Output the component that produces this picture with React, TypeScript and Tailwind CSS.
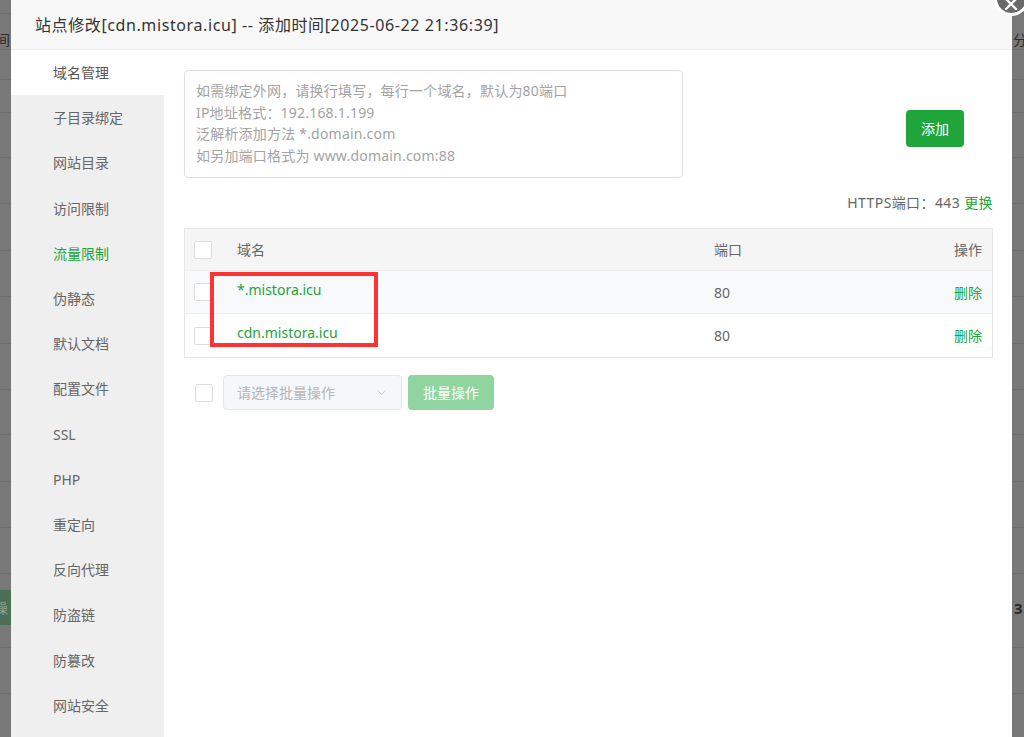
import { ChevronDown } from "lucide-react";

const menu = [
  "域名管理",
  "子目录绑定",
  "网站目录",
  "访问限制",
  "流量限制",
  "伪静态",
  "默认文档",
  "配置文件",
  "SSL",
  "PHP",
  "重定向",
  "反向代理",
  "防盗链",
  "防篡改",
  "网站安全",
];

const domains = [
  { name: "*.mistora.icu", port: 80, hover: true },
  { name: "cdn.mistora.icu", port: 80, hover: false },
];

const bgLines = [13, 49, 79, 112, 157, 203, 250, 296, 343, 389, 434, 481, 527, 573, 647, 693];

function Checkbox() {
  return <span className="block w-[18px] h-[18px] rounded-[2px] border border-[#ddd] bg-white" />;
}

export default function App() {
  return (
    <div className="relative w-[1024px] h-[737px] overflow-hidden bg-[#787878] font-['Noto_Sans','Noto_Sans_CJK_SC',sans-serif] text-[14px]">
      {/* dimmed page behind the dialog */}
      {bgLines.map((y) => (
        <div key={y} className="absolute left-0 right-0 h-px bg-[#6e6e6e]" style={{ top: y }} />
      ))}
      <div className="absolute left-[-4px] top-[29px] text-[14px] text-[#2a2a2a] whitespace-nowrap">间</div>
      <div className="absolute left-[1013px] top-[29px] text-[14px] text-[#2a2a2a] whitespace-nowrap">分类</div>
      <div className="absolute left-0 top-[590px] w-[11px] h-[35px] bg-[#4c6e52] text-[14px] leading-[35px] text-[#8aa58f] overflow-hidden whitespace-nowrap">
        <span className="ml-[-6px]">操</span>
      </div>
      <div className="absolute left-[1014px] top-[597px] text-[15px] font-bold text-[#2a2a2a]">3</div>

      {/* dialog */}
      <div className="absolute left-[11px] top-0 w-[1001px] h-[760px] bg-white flex flex-col">
        <div className="h-[50px] shrink-0 bg-[#f8f8f8] border-b border-[#eee] pl-[24px] flex items-center text-[16px] tracking-[0.6px] text-[#333]">
          站点修改[cdn.mistora.icu] -- 添加时间[2025-06-22 21:36:39]
        </div>
        <div className="flex flex-1">
          <div className="w-[153px] shrink-0 bg-[#efefef]">
            {menu.map((m, i) => (
              <div
                key={m}
                className={
                  "h-[45.2px] pl-[42px] flex items-center " +
                  (i === 0 ? "bg-white text-[#555]" : i === 4 ? "text-[#20a53a]" : "text-[#666]")
                }
              >
                {m}
              </div>
            ))}
          </div>

          <div className="flex-1 pl-[20px] pr-[19px] pt-[20px]">
            <div className="flex items-start">
              <div className="w-[499px] h-[108px] rounded-[4px] border border-[#dcdfe6] px-[11px] pt-[9px] text-[14px] leading-[21.5px] tracking-[0.2px] text-[#a3a3a3]">
                <div>如需绑定外网，请换行填写，每行一个域名，默认为80端口</div>
                <div>IP地址格式：192.168.1.199</div>
                <div>泛解析添加方法 *.domain.com</div>
                <div>如另加端口格式为 www.domain.com:88</div>
              </div>
              <button className="ml-auto mr-[29px] mt-[40px] w-[58px] h-[37px] rounded-[4px] bg-[#20a53a] text-white text-[14px]">
                添加
              </button>
            </div>

            <div className="mt-[15px] h-[20px] leading-[20px] text-right text-[#666] tracking-[0.4px]">
              HTTPS端口：443 <span className="text-[#20a53a]">更换</span>
            </div>

            <div className="relative mt-[15px] border border-[#e6e6e6]">
              <div className="h-[42px] flex items-center bg-[#f5f5f5] border-b border-[#eee] text-[#666]">
                <div className="w-[52px] pl-[9px]">
                  <Checkbox />
                </div>
                <div className="w-[477px]">域名</div>
                <div className="flex-1">端口</div>
                <div className="pr-[10px]">操作</div>
              </div>
              {domains.map((d, i) => (
                <div
                  key={d.name}
                  className={
                    "h-[43px] flex items-center " +
                    (d.hover ? "bg-[#f8f9fb] " : "bg-white ") +
                    (i < domains.length - 1 ? "border-b border-[#eee]" : "")
                  }
                >
                  <div className="w-[52px] pl-[9px]">
                    <Checkbox />
                  </div>
                  <div className="w-[477px] pb-[6px] text-[#20a53a]">{d.name}</div>
                  <div className="flex-1 text-[#666]">{d.port}</div>
                  <div className="pr-[10px] text-[#20a53a]">删除</div>
                </div>
              ))}
              <div className="absolute left-[25px] top-[43px] w-[168px] h-[75px] border-[4px] border-[#ff3333]" />
            </div>

            <div className="mt-[17px] flex items-center">
              <div className="pl-[11px] pr-[10px]">
                <Checkbox />
              </div>
              <div className="w-[179px] h-[35px] rounded-[4px] border border-[#e4e7ed] bg-[#f5f7fa] pl-[13px] pr-[12px] flex items-center justify-between text-[#b5b5b5]">
                <span>请选择批量操作</span>
                <ChevronDown className="w-[15px] h-[15px] text-[#c0c4cc]" strokeWidth={1.5} />
              </div>
              <button className="ml-[6px] w-[86px] h-[35px] rounded-[4px] bg-[#90d4a0] text-white text-[14px]">
                批量操作
              </button>
            </div>
          </div>
        </div>
      </div>

      {/* close button */}
      <div className="absolute left-[994px] top-[-19px] w-[35px] h-[35px] rounded-full bg-[#6a6a6a] border-[3px] border-white flex items-center justify-center">
        <svg width="16" height="16" viewBox="0 0 16 16" className="mt-[10px] ml-[-2px]">
          <path d="M3 3 L13 13 M13 3 L3 13" stroke="white" strokeWidth="2.4" strokeLinecap="round" />
        </svg>
      </div>
    </div>
  );
}
